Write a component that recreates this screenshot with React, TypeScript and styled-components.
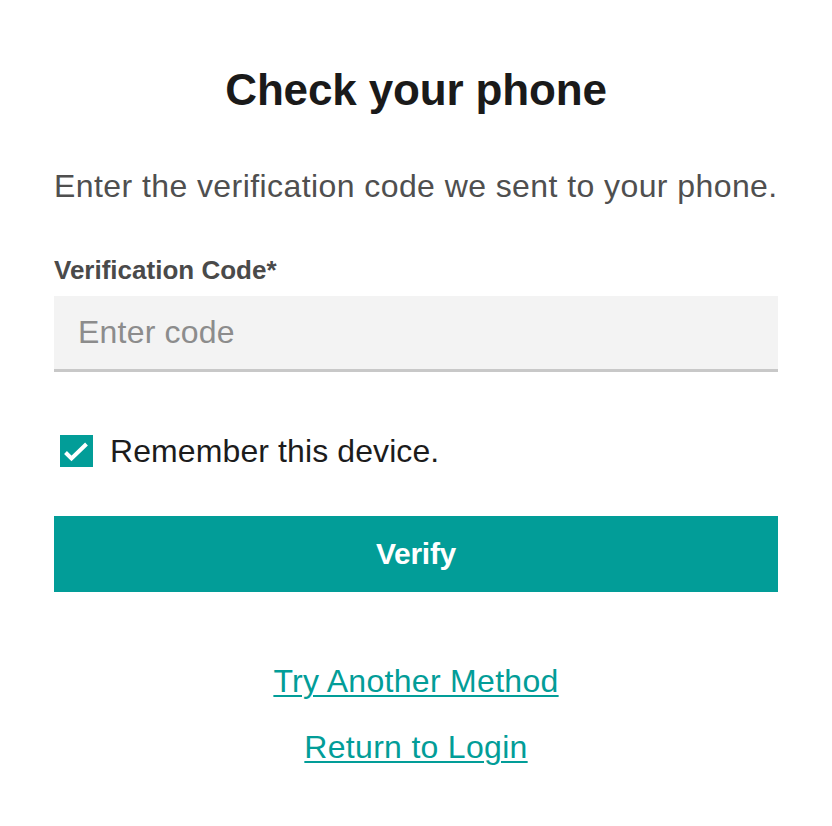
import React from "react";
import styled, { createGlobalStyle } from "styled-components";

const Global = createGlobalStyle`
  html, body { margin: 0; padding: 0; background: #ffffff; }
  body { font-family: "Liberation Sans", Arial, Helvetica, sans-serif; }
  * { box-sizing: border-box; }
`;

const TEAL = "#029d98";

const Page = styled.main`
  width: 832px;
  padding: 64px 54px 40px;
  display: flex;
  flex-direction: column;
`;

const Title = styled.h1`
  margin: 0;
  font-size: 44px;
  line-height: 52px;
  font-weight: 700;
  color: #1a1a1a;
  text-align: center;
  letter-spacing: -0.15px;
`;

const Intro = styled.p`
  margin: 50px 0 0;
  font-size: 32px;
  line-height: 40px;
  color: #4f4f4f;
  letter-spacing: 0.42px;
`;

const Label = styled.label`
  margin-top: 48px;
  font-size: 26px;
  line-height: 32px;
  font-weight: 700;
  color: #4a4a4a;
`;

const Input = styled.input`
  margin-top: 10px;
  width: 100%;
  height: 76px;
  border: none;
  border-bottom: 3px solid #c8c8c8;
  background: #f3f3f3;
  padding: 0 24px;
  font-family: inherit;
  font-size: 32px;
  color: #333;
  letter-spacing: 0.2px;
  outline: none;
  &::placeholder { color: #8c8c8c; }
`;

const CheckRow = styled.label`
  margin-top: 59px;
  display: flex;
  align-items: center;
  gap: 17px;
  padding-left: 6px;
  height: 40px;
  cursor: pointer;
`;

const Box = styled.span`
  width: 33px;
  height: 32px;
  background: ${TEAL};
  display: flex;
  align-items: center;
  justify-content: center;
  flex: none;
`;

const CheckText = styled.span`
  font-size: 32px;
  line-height: 40px;
  color: #1c1c1c;
  letter-spacing: 0.1px;
`;

const Button = styled.button`
  margin-top: 45px;
  width: 100%;
  height: 76px;
  border: none;
  background: ${TEAL};
  color: #ffffff;
  font-family: inherit;
  font-size: 30px;
  font-weight: 700;
  letter-spacing: -0.3px;
  cursor: pointer;
`;

const Links = styled.nav`
  margin-top: 69px;
  display: flex;
  flex-direction: column;
  align-items: center;
  gap: 26px;
`;

const TextLink = styled.a`
  font-size: 32px;
  line-height: 40px;
  color: ${TEAL};
  text-decoration: underline;
  text-decoration-thickness: 2px;
  text-underline-offset: 3px;
  letter-spacing: 0.3px;
`;

export default function App() {
  return (
    <>
      <Global />
      <Page>
        <Title>Check your phone</Title>
        <Intro>Enter the verification code we sent to your phone.</Intro>
        <Label htmlFor="code">Verification Code*</Label>
        <Input id="code" placeholder="Enter code" />
        <CheckRow>
          <Box>
            <svg width="33" height="32" viewBox="0 0 33 32">
              <path d="M5.5 17.5 L11.5 23.5 L26.5 9" fill="none" stroke="#ffffff" strokeWidth="4" />
            </svg>
          </Box>
          <CheckText>Remember this device.</CheckText>
        </CheckRow>
        <Button>Verify</Button>
        <Links>
          <TextLink href="#">Try Another Method</TextLink>
          <TextLink href="#">Return to Login</TextLink>
        </Links>
      </Page>
    </>
  );
}
